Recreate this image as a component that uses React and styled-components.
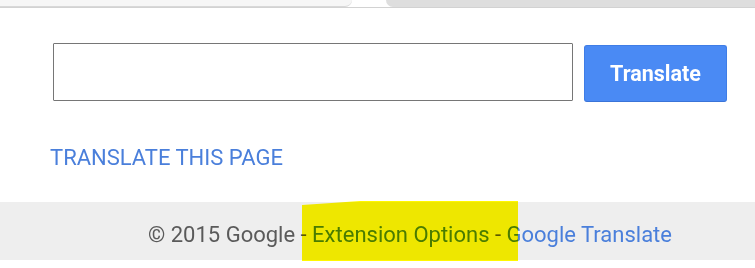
import React from 'react';
import styled, { createGlobalStyle } from 'styled-components';

const GlobalStyle = createGlobalStyle`
  html, body {
    margin: 0;
    padding: 0;
    background: #ffffff;
    font-family: Roboto, "Liberation Sans", Arial, sans-serif;
  }
`;

const Page = styled.div`
  width: 755px;
  height: 268px;
  overflow: hidden;
  background: #ffffff;
`;

const TabStrip = styled.div`
  display: flex;
  height: 7px;
  border-bottom: 1px solid #d2d2d2;
`;

const Tab = styled.div`
  height: 100%;
  background: ${props => (props.active ? '#f6f6f6' : '#dedede')};
  border-bottom: ${props => (props.active ? '1px solid #d8d8d8' : 'none')};
  box-sizing: border-box;
  ${props =>
    props.active
      ? 'width: 352px; border-bottom-right-radius: 14px;'
      : 'flex: 1; margin-left: 34px; border-bottom-left-radius: 14px;'}
`;

const Form = styled.form`
  display: flex;
  align-items: flex-start;
  gap: 11px;
  padding: 35px 0 0 53px;
  margin: 0;
`;

const Input = styled.input`
  width: 520px;
  height: 58px;
  box-sizing: border-box;
  border: 1px solid #767676;
  border-radius: 1px;
  outline: none;
  font-size: 18px;
  padding: 0 10px;
`;

const Button = styled.button`
  width: 143px;
  height: 57px;
  margin-top: 2px;
  box-sizing: border-box;
  border: 1px solid #3f7de6;
  border-bottom-color: #3a74d8;
  border-radius: 3px;
  background: #4a8af4;
  color: #ffffff;
  font-family: Roboto, "Liberation Sans", Arial, sans-serif;
  font-weight: 700;
  font-size: 21.5px;
  padding: 0;
  cursor: pointer;
`;

const PageLink = styled.a`
  display: block;
  margin: 42px 0 0 50px;
  height: 28px;
  color: #4a7fdb;
  font-size: 22px;
  line-height: 28px;
  text-decoration: none;
  text-transform: uppercase;
`;

const Footer = styled.footer`
  position: relative;
  margin-top: 30px;
  height: 58px;
  background: #eeeeee;
  display: flex;
  align-items: center;
  padding-left: 148px;
  font-size: 22px;
  color: #5a5a5a;
`;

const FooterText = styled.span`
  position: relative;
  top: 3px;
`;

const FooterLink = styled.a`
  color: #4a7fdb;
  text-decoration: none;
`;

const Highlight = styled.svg`
  position: absolute;
  left: 302px;
  top: -1px;
  mix-blend-mode: multiply;
  pointer-events: none;
`;

export default function App() {
  return (
    <Page>
      <GlobalStyle />
      <TabStrip>
        <Tab active />
        <Tab />
      </TabStrip>
      <Form onSubmit={e => e.preventDefault()}>
        <Input type="text" />
        <Button type="submit">Translate</Button>
      </Form>
      <PageLink href="#">Translate this page</PageLink>
      <Footer>
        <FooterText>
          © 2015 Google - <FooterLink href="#">Extension Options</FooterLink> -{' '}
          <FooterLink href="#">Google Translate</FooterLink>
        </FooterText>
        <Highlight width="216" height="60" viewBox="0 0 216 60">
          <path d="M0 4 Q30 2 58 0 L216 0 L216 60 L0 60 Z" fill="#fff800" />
        </Highlight>
      </Footer>
    </Page>
  );
}
